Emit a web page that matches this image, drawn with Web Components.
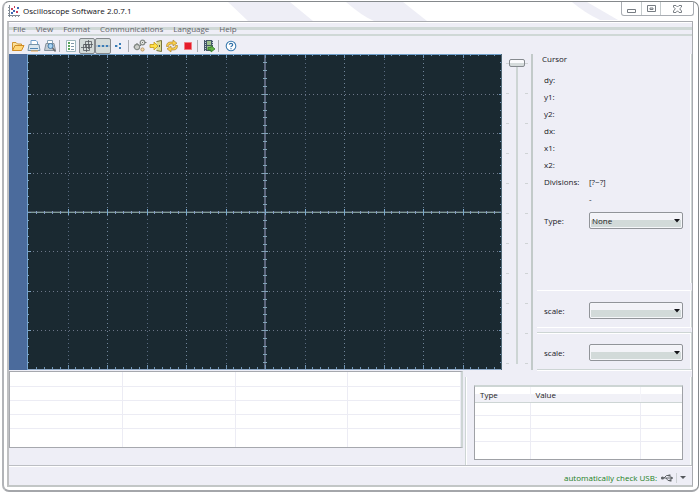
<!DOCTYPE html>
<html lang="en">
<head>
<meta charset="utf-8">
<title>Oscilloscope Software 2.0.7.1</title>
<style>
  :root {
    --face: #eeeef6;
    --line: #cdd5d4;
    --edge: #a6a8ae;
    --ink: #18181e;
  }
  * { box-sizing: border-box; }
  body { margin: 0; min-height: 100vh; display: flex; background: #fff; color: var(--ink); font-family: "Open Sans", "Noto Sans", sans-serif; font-size: 8px; }
</style>
</head>
<body>
<app-window></app-window>

<script>
const define = (name, html, setup) => {
  const tpl = document.createElement('template');
  tpl.innerHTML = '<style>* { box-sizing: border-box; } :host { box-sizing: border-box; }</style>' + html;
  customElements.define(name, class extends HTMLElement {
    constructor() {
      super();
      this.attachShadow({ mode: 'open' });
    }
    connectedCallback() {
      if (this.shadowRoot.childNodes.length) return;
      this.shadowRoot.append(tpl.content.cloneNode(true));
      if (setup) setup(this, this.shadowRoot);
    }
  });
};

/* Title bar with caption buttons */
define('title-bar', `
<style>
  :host { display: flex; align-items: flex-start; height: 19px; position: relative; }
  .bands { position: absolute; left: 0; top: 0; width: 700px; max-width: 100%; height: 19px; }
  .logo { width: 12px; height: 12px; margin: 3px 0 0 1px; position: relative; }
  h1 { margin: 2px 0 0 3px; flex: 1; font-size: 8px; line-height: 14px; font-weight: 400; color: #101014; white-space: nowrap; position: relative; }
  .caps { display: flex; position: relative; margin-right: -1px; border: 1px solid #a9adb3; border-top: 0; border-radius: 0 0 3px 3px; background: #fff; }
  button { height: 13px; width: 19px; padding: 0; border: 0; border-left: 1px solid #c5cbcd; background: none; display: grid; place-items: center; }
  button:first-child { border-left: 0; }
  button:last-child { width: 33px; }
  svg { display: block; }
</style>
<svg class="bands" viewBox="7 2 700 19" preserveAspectRatio="xMinYMin slice" fill="#eeeef6" aria-hidden="true">
  <path d="M228 2H290L313 21H248Z"/><path d="M346 2H403L427 21H374Q362 16 346 2Z"/><path d="M572 2H587L618 20H600Q585 13 572 2Z"/>
</svg>
<svg class="logo" viewBox="0 0 12 12" aria-hidden="true">
  <path d="M1.5 0V12M0 10.5H12" stroke="#7b858f" fill="none"/><path d="M0 2.5H2M0 5.5H2M0 8.5H2M4.5 10V12M7.500 10V12M10.500 10V12" stroke="#8a929c" fill="none"/>
  <path d="M3 3h2v2H3zM8 6h2v2H8zM6 1h1v2H6z" fill="#c8405a"/><path d="M5 5h2v2H5zM9 2h2v2H9zM3 7h2v2H3z" fill="#3f68b4"/>
</svg>
<h1><slot></slot></h1>
<div class="caps">
  <button aria-label="Minimize"><svg width="9" height="8"><path d="M.5 4.500h8v3h-8z" fill="#fff" stroke="#777d83"/></svg></button>
  <button aria-label="Maximize"><svg width="9" height="8"><path d="M.5.5h8v6h-8zM3 3h3v1.500H3z" fill="#fff" stroke="#777d83"/></svg></button>
  <button aria-label="Close"><svg width="9" height="8"><path d="M.5.5h2.500L4.500 2 6 .5h2.500v1.500L6.700 3.800 8.500 6v1.500H6L4.500 5.800 3 7.500H.5V6l1.800-2.200L.5 2z" fill="#fff" stroke="#777d83"/></svg></button>
</div>`);

define('menu-bar', `
<style>
  :host { display: block; height: 15px; padding-top: 1px; background: linear-gradient(#fff 1px, transparent 1px 5px, #cfd8d6 5px 8px, transparent 8px 12px, #cfd8d6 12px 14px, transparent 14px); }
  nav { display: flex; gap: 10px; padding-left: 4px; }
  button { border: 0; padding: 0; background: none; font: inherit; line-height: 12px; color: #64656b; }
</style>
<nav></nav>`, (el, root) => {
  for (const t of ['File', 'View', 'Format', 'Communications', 'Language', 'Help']) {
    const b = document.createElement('button');
    b.textContent = t;
    root.querySelector('nav').append(b);
  }
});

/* Toolbar icons are drawn on a 14x14 canvas */
const ICONS = {
  'Open': '<path d="M1.500 11.500V3.500H5L6.500 5H10.500V6.500" fill="#fbe09a" stroke="#cf9432"/><path d="M1.500 11.500L4 6.500H13L10.500 11.500Z" fill="#ffd678" stroke="#cf8b25"/>',
  'Print': '<path d="M4 6V1.500H9L10.500 3V6" fill="#fff" stroke="#6f9fcb"/><path d="M2 5.500H12L13 11.500H1Z" fill="#dbe7ef" stroke="#7895aa"/><path d="M3 9.500H11" stroke="#5087b5"/><path d="M4 12h7" stroke="#e8a850"/>',
  'Print preview': '<path d="M4.500 5V1.500H9.500V5" fill="#fff" stroke="#8aa4b6"/><path d="M3 4.500H11L12.500 11.500H1.500Z" fill="#c3cbd2" stroke="#85919c"/><circle cx="7.500" cy="7" r="2.500" fill="#a8d4f4" stroke="#467ba7"/><path d="M9.500 9L12.500 12.500" stroke="#6c6c70" stroke-width="1.500"/>',
  'List': '<path d="M2.500 1.500H11.500V12.500H2.500Z" fill="#fff" stroke="#9eb6bd"/><path d="M4 3h2v2H4zM4 6h2v2H4zM4 9h2v2H4z" fill="#58a45c"/><path d="M7 4.500H10M7 7.500H10M7 10.500H10" stroke="#8196aa"/>',
  'Grid': '<path d="M5.500 2.500H11.500V8.500H5.500ZM8.500 1V10M4 5.500H13M3.500 5.500H9.500V11.500H3.500ZM6.500 5.500V13M1 8.500H9.500" fill="none" stroke="#565b60" stroke-width=".8"/>',
  'Dotted line': '<path d="M0 7H14" stroke="#8eabc6"/><path d="M2 6h2v2H2zM6 6h2v2H6zM10 6h2v2h-2z" fill="#397cb6"/>',
  'Dots': '<path d="M3 6h2v2H3zM7 4h2v2H7zM7 8h2v2H7z" fill="#397cb6"/><path d="M5 6h1v2H5z" fill="#a8c5dc"/>',
  'Settings': '<g fill="#e8e9e5" stroke="#858b88" stroke-width="1.300"><circle cx="4" cy="8" r="2.500"/><circle cx="9.500" cy="3.500" r="2.300"/></g><circle cx="9.500" cy="10.500" r="1.600" fill="#f2dab1" stroke="#bb9a63"/><path d="M4 7.500v1M9.500 3v1M7 6l1 1M0.500 8h1M4 4v1M12 3.500h1.500" stroke="#777"/>',
  'Connect': '<path d="M7.500 2.500L12.500 1.500V12.500L7.500 11.500" fill="#dedb92" stroke="#76743e"/><path d="M1 5.500H5V3L9 7 5 11V8.500H1Z" fill="#ffe047" stroke="#c39b18" stroke-width=".8"/><path d="M10.500 6v2" stroke="#555"/>',
  'Refresh': '<path d="M1.500 7.500Q1.500 3 5.500 3H8V1L12 4.200 8 7V5H6Q3.500 5 3.500 7.500Z" fill="#f8cf4e" stroke="#a87b1d" stroke-width=".6"/><path d="M12.500 6.500Q12.500 11 8.500 11H6V13L2 9.800 6 7V9H8Q10.500 9 10.500 6.500Z" fill="#f8cf4e" stroke="#a87b1d" stroke-width=".6"/>',
  'Stop': '<path d="M3.500 3.500h7v7h-7z" fill="#e51b2b" stroke="#f07a80"/>',
  'Export': '<path d="M2 1H11V12H2Z" fill="#455669"/><path d="M5 2h4v4H5zM5 7h4v4H5z" fill="#9fc18e"/><path d="M3.500 1V12M10.500 1V7" stroke="#c8d3d8" stroke-dasharray="1 1"/><path d="M6 8.500H9V6.500L13 10 9 13V11H6Z" fill="#61b344" stroke="#397b2b" stroke-width=".8"/>',
  'Help': '<circle cx="8" cy="7" r="4.800" fill="#fff" stroke="#3d7cb0" stroke-width="1.100"/><path d="M6.300 5.600Q6.400 4.300 8 4.300T9.700 5.700Q9.700 6.500 8.800 7T8 8.200M8 9.200V10.200" fill="none" stroke="#2f6fa8" stroke-width="1.200"/>'
};
define('tool-bar', `
<style>
  :host { display: flex; align-items: center; height: 17px; padding-left: 1px; }
  button { width: 16px; height: 16px; padding: 0; border: 1px solid transparent; border-radius: 2px; background: none; }
  button[aria-pressed=true] { background: #d3dbda; border-color: #85898d; }
  svg { display: block; width: 14px; height: 14px; }
  i { width: 1px; height: 12px; margin: 0 3px 0 1px; background: #a9acb2; }
</style>`, (el, root) => {
  for (const [name, art] of Object.entries(ICONS)) {
    if (['List', 'Settings', 'Export', 'Help'].includes(name)) root.append(document.createElement('i'));
    const b = document.createElement('button');
    b.setAttribute('aria-label', name);
    if (name === 'Grid' || name === 'Dotted line') b.setAttribute('aria-pressed', 'true');
    b.innerHTML = `<svg viewBox="0 0 14 14">${art}</svg>`;
    root.append(b);
  }
});

/* Scope display: 12 x 8 divisions with five minor ticks in each */
define('scope-plot', `
<style>
  :host { display: flex; min-width: 0; contain: size; }
  .gutter { width: 19px; background: #4b6b9c; border-right: 1px solid #76a5cf; }
  svg { flex: 1; width: 0; min-width: 0; height: 100%; display: block; background: #1a2931; }
</style>
<div class="gutter"></div>
<svg viewBox="0 0 474 316" preserveAspectRatio="none" role="img" aria-label="Waveform display" shape-rendering="crispEdges"></svg>`, (el, root) => {
  const dx = 39.5, dy = 39.4, cx = 237, cy = 158;
  let s = '';
  const rect = (x, y, w, h, c) => { s += `<rect x="${Math.round(x)}" y="${Math.round(y)}" width="${w}" height="${h}" fill="${c}"/>`; };
  for (let i = -5; i <= 5; i++) {
    if (!i) continue;
    for (let y = 1; y < 315; y += 4) rect(cx + i * dx, y, 1, 1, i % 2 ? '#596a80' : '#70859a');
  }
  for (let j = -3; j <= 3; j++) {
    if (!j) continue;
    for (let x = 1; x < 474; x += 4) rect(x, cy + j * dy, 1, 1, '#6d7688');
  }
  rect(0, cy - 1, 474, 1, '#45515a');
  rect(0, cy, 474, 1, '#7f9a97');
  rect(cx - 1, 0, 2, 316, '#5d667d');
  for (let k = -29; k <= 29; k++) {
    const x = cx + k * dx / 5, big = k % 5 === 0;
    rect(x, cy - (big ? 3 : 1), 1, big ? 6 : 3, big ? '#78a9cf' : '#839bc2');
    rect(x, 0, 1, big ? 4 : 2, '#7094b4');
    rect(x, big ? 311 : 313, 1, big ? 4 : 2, '#7094b4');
  }
  for (let k = -19; k <= 19; k++) {
    const y = cy + k * dy / 5, big = k % 5 === 0;
    rect(cx - (big ? 3 : 2), y, big ? 6 : 4, 1, '#82a5b8');
    rect(0, y, big ? 3 : 1, 1, '#82a5c4');
    rect(big ? 471 : 472, y, big ? 3 : 2, 1, '#7094b4');
  }
  rect(0, 0, 474, 1, '#6b9cc8');
  rect(0, 315, 474, 1, '#8fa9c8');
  rect(473, 0, 1, 316, '#4e6674');
  root.querySelector('svg').innerHTML = s;
});

/* Sized by its grid cell only, so the vertical range never stretches the row */
define('level-slider', `
<style>
  :host { display: flex; justify-content: center; contain: size; padding: 5px 0 6px; border-right: 2px solid #c2cac9; }
  input { appearance: none; writing-mode: vertical-lr; width: 22px; height: 100%; margin: 0; background:
    linear-gradient(90deg, #cdd5d4, #cdd5d4) 50% 0 / 2px 100% no-repeat,
    linear-gradient(90deg, var(--face) 0 0) 50% 0 / 16px 100% no-repeat,
    repeating-linear-gradient(transparent 0 4px, #cfd3d5 4px 5px, transparent 5px 30px); }
  input::-webkit-slider-thumb { appearance: none; box-sizing: border-box; width: 16px; height: 8px; border: 1px solid #85898e; border-radius: 2px; background: linear-gradient(#fafafc 50%, #d5dbdb 50%); }
</style>
<input type="range" aria-label="Level" min="0" max="100" value="0">`);

define('combo-row', `
<style>
  :host { display: grid; grid-template-columns: 45px minmax(0, 1fr); align-items: center; padding: 0 8px 0 7px; }
  div { position: relative; }
  select { appearance: none; display: block; width: 100%; height: 17px; padding: 0 14px 0 2px; border: 1px solid #919499; border-radius: 2px; background: linear-gradient(#f3f3f8 48%, #d2dad9 48%); box-shadow: inset 0 0 0 1px #f5f6f9; color: #1c1c22; font: inherit; }
  svg { position: absolute; right: 3px; top: 7px; pointer-events: none; }
</style>
<label for="s"></label><div><select id="s"><option></option></select><svg width="6" height="4"><path d="M0 0H6L3 3.500Z" fill="#15151a"/></svg></div>`, (el, root) => {
  root.querySelector('label').textContent = el.getAttribute('label');
  root.querySelector('option').textContent = el.getAttribute('value') || '';
});

define('cursor-panel', `
<style>
  :host { display: flex; flex-direction: column; padding-left: 4px; line-height: 10px; color: var(--ink); }
  section { border-right: 1px solid var(--line); box-shadow: inset -1px 0 #fff; }
  .main { flex: 1; margin-bottom: 7px; }
  h2 { margin: 0 0 11px 5px; font: inherit; }
  dl { margin: 0 0 7px; padding-left: 7px; display: grid; grid-template-columns: 45px 1fr; grid-auto-rows: 11px; row-gap: 6px; }
  dt, dd { margin: 0; }
  .scale { border-top: 1px solid #fff; padding: 11px 0 8px; }
  .scale + .scale { border-top: 1px solid var(--line); margin-top: 4px; border-bottom: 1px solid var(--line); box-shadow: inset -1px 0 #fff, inset 0 1px #fff, 0 1px #fff; }
  .mid { border-bottom: 1px solid #fff; }
</style>
<section class="main">
  <h2>Cursor</h2>
  <dl><dt>dy:</dt><dd></dd><dt>y1:</dt><dd></dd><dt>y2:</dt><dd></dd><dt>dx:</dt><dd></dd><dt>x1:</dt><dd></dd><dt>x2:</dt><dd></dd><dt>Divisions:</dt><dd>[?~?]</dd><dt></dt><dd>-</dd></dl>
  <combo-row label="Type:" value="None"></combo-row>
</section>
<section class="scale mid"><combo-row label="scale:"></combo-row></section>
<section class="scale"><combo-row label="scale:"></combo-row></section>`);

const rows = (n, cols) => ('<tr>' + '<td></td>'.repeat(cols) + '</tr>').repeat(n);
define('wave-table', `
<style>
  :host { display: block; border: 1px solid #a6a8ae; border-right: 2px solid var(--line); background: #fff; }
  table { width: 100%; border-collapse: collapse; table-layout: fixed; }
  td { height: 14px; padding: 0; border-right: 1px solid #ececf4; border-bottom: 1px solid #ececf4; }
  tr:last-child td { height: 19px; border-bottom: 0; }
</style>
<table aria-label="Channels"><tbody>${rows(5, 4)}</tbody></table>`);

define('measure-table', `
<style>
  :host { display: block; border: 1px solid #9fa1a6; border-top: 2px solid var(--line); background: #fff; }
  table { width: 100%; border-collapse: collapse; table-layout: fixed; }
  .a { width: 27%; } .b { width: 53%; }
  th { height: 15px; padding: 0 0 0 5px; text-align: left; font-weight: 400; line-height: 13px; color: #1c1c22; background: linear-gradient(#fff 50%, #f1f1f7 50%); border-bottom: 1px solid var(--line); border-right: 1px solid #f4f4f9; }
  th:nth-child(2) { padding-left: 4px; }
  td { height: 13px; padding: 0; border-right: 1px solid #ececf4; border-bottom: 1px solid #ececf4; }
  tr:last-child td { height: 18px; border-bottom: 0; }
  th:last-child, td:last-child { border-right: 0; }
</style>
<table><colgroup><col class="a"><col class="b"><col></colgroup><thead><tr><th>Type</th><th>Value</th><th></th></tr></thead><tbody>${rows(4, 3)}</tbody></table>`);

define('status-bar', `
<style>
  :host { display: flex; align-items: center; justify-content: flex-end; gap: 4px; height: 20px; padding: 4px 6px 0 0; border-top: 1px solid #bcbec3; box-shadow: inset 0 1px #fff; color: #1c801c; }
  button { display: flex; align-items: center; gap: 3px; padding: 0; border: 0; background: none; }
  i { width: 1px; height: 10px; background: #cdd1d4; }
</style>
<span><slot></slot></span>
<button aria-label="USB options">
  <svg width="12" height="8" viewBox="0 0 12 8"><path d="M0 4H12M3 4L5.500 1.500H8M5 4L7 6.500H9" fill="none" stroke="#606468"/><circle cx="1.500" cy="4" r="1.500" fill="#606468"/><path d="M9.500 2L12 4 9.500 6zM7.500.5h2v2h-2zM8.500 5.500h2v2h-2z" fill="#606468"/></svg>
  <i></i><svg width="6" height="3"><path d="M0 0H6L3 3Z" fill="#55585c"/></svg>
</button>`);

define('app-window', `
<style>
  :host { flex: 1; min-width: 0; display: flex; margin: 1px 1px 1px 2px; border: 1px solid #85898c; border-left: 2px solid #b2b4b8; border-bottom: 2px solid #a4a6aa; border-radius: 7px; background: #fff; }
  .frame { flex: 1; min-width: 0; display: flex; flex-direction: column; padding: 0 5px 3px 3px; }
  .client { flex: 1; display: flex; flex-direction: column; border: 1px solid #a9abb0; border-left: 2px solid #bfc0c2; border-bottom: 2px solid #c2c6c6; background: var(--face); }
  .work { flex: 1; display: grid; grid-template-columns: minmax(0, 1fr) 31px 159px; min-height: 280px; }
  .lower { display: grid; grid-template-columns: minmax(0, 1fr) 227px; gap: 2px; margin-top: 1px; }
  wave-table { align-self: start; }
  .group { margin-top: 6px; padding: 8px 8px 5px; border-left: 1px solid var(--line); border-right: 1px solid var(--line); box-shadow: inset 1px 0 #fff, inset -1px 0 #fff; }
</style>
<div class="frame">
  <title-bar>Oscilloscope Software 2.0.7.1</title-bar>
  <main class="client">
    <menu-bar></menu-bar>
    <tool-bar></tool-bar>
    <div class="work"><scope-plot></scope-plot><level-slider></level-slider><cursor-panel></cursor-panel></div>
    <div class="lower"><wave-table></wave-table><div class="group"><measure-table></measure-table></div></div>
    <status-bar>automatically check USB:</status-bar>
  </main>
</div>`);
</script>
</body>
</html>
